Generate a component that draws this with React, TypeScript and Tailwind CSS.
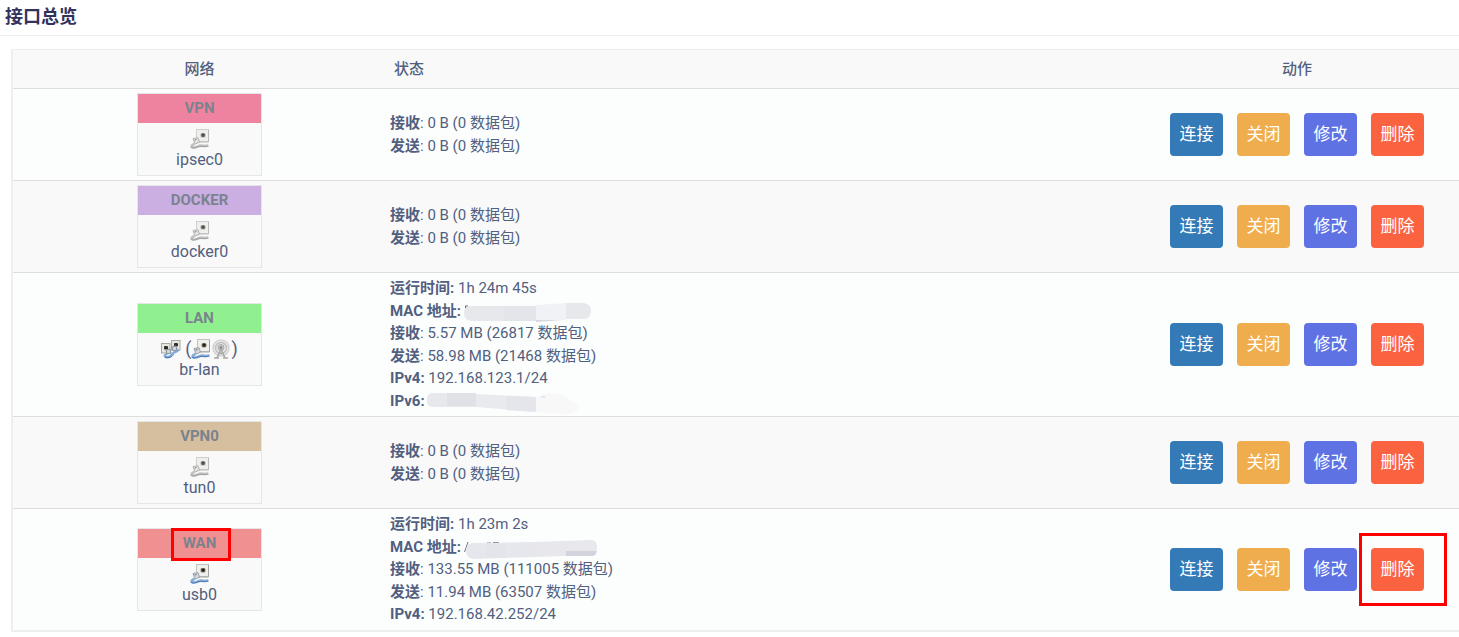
import type { ReactNode } from 'react';
import { clsx } from 'clsx';

type IconProps = { active?: boolean };

function Ethernet({ active }: IconProps) {
  return (
    <svg width="20" height="20" viewBox="0 0 20 20" aria-hidden="true">
      <rect x="6.5" y="0.5" width="12" height="12" fill="#efefec" stroke={active ? '#c2c2bc' : '#cfcfcf'} />
      <path d="M18.5 1v12H8" fill="none" stroke={active ? '#a5a59f' : '#bababa'} />
      <rect x="10.5" y="4" width="5" height="4.500" rx="1.500" fill={active ? '#8d8c74' : '#a8a8a8'} />
      <rect x="11.500" y="4.500" width="3.200" height="3.200" rx="1" fill={active ? '#22241a' : '#505050'} />
      <path d="M3 9.500l5-.8 1.500 4.500-4.500 2z" fill={active ? '#d4d8dd' : '#e2e2e2'} stroke={active ? '#9aa1aa' : '#b3b3b3'} />
      <path d="M4.5 11l2-.5" stroke={active ? '#6b7380' : '#888'} fill="none" />
      <path d="M4.5 15c-3.500 1.500-4 3-1.500 3.500 3.500.5 5-2 8-2 2.500 0 3 1 7.500 0" fill="none" stroke={active ? '#85abd8' : '#c0c0c0'} strokeWidth="2.500" />
      <path d="M1 18.500c3.500 1.500 6-1 9-1s4 .5 8-.5" fill="none" stroke={active ? '#4c7ab5' : '#a0a0a0'} />
    </svg>
  );
}

function Bridge() {
  return (
    <svg width="20" height="20" viewBox="0 0 20 20" aria-hidden="true">
      <rect x="10.5" y="1.500" width="8.500" height="9.500" fill="#e6e6e2" stroke="#a8a8a2" />
      <rect x="0.5" y="4.500" width="8.500" height="9.500" fill="#e6e6e2" stroke="#a8a8a2" />
      <rect x="13" y="4" width="4" height="3.500" rx="1" fill="#2d2f22" />
      <rect x="3" y="7" width="4" height="3.500" rx="1" fill="#2d2f22" />
      <path d="M5 11l4-1 1 4-4 1zM11 8l4-1 1 4-4 1z" fill="#d4d8dd" stroke="#858c95" />
      <path d="M6 15c-3.500 1.500-3 3.500 1 3 4.500-.5 3-3.500 6-4.500 3-.8 4-1 4.500-3" fill="none" stroke="#7fa8d8" strokeWidth="2.200" />
      <path d="M4 18.500c4 1 7-.5 8.500-3" fill="none" stroke="#3f70ad" />
    </svg>
  );
}

function Wifi() {
  return (
    <svg width="20" height="20" viewBox="0 0 20 20" aria-hidden="true">
      <circle cx="10" cy="9" r="8" fill="#ebebeb" stroke="#d3d3d3" strokeWidth="1.500" />
      <circle cx="10" cy="9" r="5.500" fill="none" stroke="#c0c0c0" strokeWidth="1.500" />
      <circle cx="10" cy="8.500" r="3" fill="#cfcfcf" stroke="#a8a8a8" />
      <circle cx="10" cy="8.500" r="1.500" fill="#8a8a8a" />
      <path d="M10 10l-4 9M10 10l4 9M7.500 14.500h5M3 19h5M12 19h5" fill="none" stroke="#a8a8a8" strokeWidth="1.500" />
    </svg>
  );
}

function LanMask() {
  return (
    <svg className="absolute left-full -top-0.5 -ml-px" width="134" height="24" viewBox="0 0 134 24" aria-hidden="true">
      <path d="M5.500 9V6H8" fill="none" stroke="#525f7f" />
      <path d="M10 6H76V21H12Q4 21 4 13Q4 6 10 6Z" fill="#e7e8ec" />
      <path d="M44 6H76V21H44Z" fill="#e3e5ea" />
      <path d="M76 5L106 3V20L76 21Z" fill="#f1f2f5" />
      <path d="M76 20L102 20L76 22Z" fill="#d5d7df" />
      <path d="M106 3H124Q131 4 131 11Q131 18 124 19H106Z" fill="#e7e8ec" />
    </svg>
  );
}

function Ipv6Mask() {
  return (
    <svg className="absolute left-full -top-0.5 -ml-px" width="160" height="26" viewBox="0 0 160 26" aria-hidden="true">
      <path d="M8 3H52V17H8Q3 17 3 10Q3 3 8 3Z" fill="#e7e8ec" />
      <path d="M23 3H52V16H23Z" fill="#e0e1e7" />
      <path d="M52 4L112 7V22L52 17Z" fill="#e9eaee" />
      <path d="M82 6L112 7V22L82 20Z" fill="#e4e6eb" />
      <path d="M112 7L122 3Q142 3 144 9Q156 13 155 18Q152 24 140 24L112 22Z" fill="#f8f8f9" />
      <path d="M117 7h4" stroke="#d3d5dc" />
    </svg>
  );
}

function WanMask() {
  return (
    <svg className="absolute left-full -top-0.5 -ml-px" width="140" height="24" viewBox="0 0 140 24" aria-hidden="true">
      <path d="M4.500 16L8 6M27 7h4M33 6.500h6" fill="none" stroke="#68738e" />
      <path d="M12 7L74 6V21L14 23Q6 22 6 15Q6 8 12 7Z" fill="#e6e7ec" />
      <path d="M26 9H46V22H26Z" fill="#e2e5ea" />
      <path d="M74 6L132 4Q137 5 137 11Q137 18 132 20H106L74 21Z" fill="#e7e7ec" />
      <path d="M106 15H137Q136 20 132 20H106Z" fill="#d2d3dc" />
    </svg>
  );
}

type Field = { label: string; value?: string; light?: boolean; mask?: ReactNode };

type Interface = {
  name: string;
  device: string;
  color: string;
  icons: ReactNode;
  fields: Field[];
  marked?: boolean;
};

const traffic = (rx: string, tx: string): Field[] => [
  { label: '接收', value: rx, light: true },
  { label: '发送', value: tx, light: true },
];

const interfaces: Interface[] = [
  { name: 'VPN', device: 'ipsec0', color: 'bg-[#ee839f]', icons: <Ethernet />, fields: traffic('0 B (0 数据包)', '0 B (0 数据包)') },
  { name: 'DOCKER', device: 'docker0', color: 'bg-[#cbaee2]', icons: <Ethernet />, fields: traffic('0 B (0 数据包)', '0 B (0 数据包)') },
  {
    name: 'LAN',
    device: 'br-lan',
    color: 'bg-[#90f090]',
    icons: (
      <>
        <Bridge />
        <span className="ml-1 text-lg">(</span>
        <Ethernet active />
        <Wifi />
        <span className="text-lg">)</span>
      </>
    ),
    fields: [
      { label: '运行时间', value: '1h 24m 45s' },
      { label: 'MAC 地址', mask: <LanMask /> },
      ...traffic('5.57 MB (26817 数据包)', '58.98 MB (21468 数据包)'),
      { label: 'IPv4', value: '192.168.123.1/24' },
      { label: 'IPv6', mask: <Ipv6Mask /> },
    ],
  },
  { name: 'VPN0', device: 'tun0', color: 'bg-[#d6bf9f]', icons: <Ethernet />, fields: traffic('0 B (0 数据包)', '0 B (0 数据包)') },
  {
    name: 'WAN',
    device: 'usb0',
    color: 'bg-[#f09090]',
    icons: <Ethernet active />,
    marked: true,
    fields: [
      { label: '运行时间', value: '1h 23m 2s' },
      { label: 'MAC 地址', mask: <WanMask /> },
      ...traffic('133.55 MB (111005 数据包)', '11.94 MB (63507 数据包)'),
      { label: 'IPv4', value: '192.168.42.252/24' },
    ],
  },
];

const actions = [
  { label: '连接', color: 'bg-[#337ab7]' },
  { label: '关闭', color: 'bg-[#f0ad4e]' },
  { label: '修改', color: 'bg-[#5e72e4]' },
  { label: '删除', color: 'bg-[#fb6340]' },
];

function InterfaceBox({ item }: { item: Interface }) {
  return (
    <div className="mx-auto h-[83px] w-[125px] border border-[#e6e6e8] bg-[#f9f9f9] text-center text-base">
      <div className={clsx('relative h-[29px] text-[15px] font-bold leading-[29px] text-[#7b838e]', item.color)}>
        {item.name}
        {item.marked && <span className="absolute -top-px left-[33px] h-[33px] w-[60px] border-3 border-[#ff0000]" />}
      </div>
      <div className="mt-1.5 flex h-5 items-center justify-center leading-5">{item.icons}</div>
      <div className="leading-[22px]">{item.device}</div>
    </div>
  );
}

function InterfaceRow({ item }: { item: Interface }) {
  return (
    <tr className="bg-[#fcfefd] even:bg-[#f9f9f9]">
      <td className="border-t border-[#dddddd] p-1">
        <InterfaceBox item={item} />
      </td>
      <td className="border-t border-[#dddddd] p-1">
        {item.fields.map((f) => (
          <div key={f.label}>
            <span className="relative">
              <strong>{f.label}{!f.light && ':'}</strong>
              {f.light && ':'}
              {f.mask}
            </span>{' '}
            {f.value}
          </div>
        ))}
      </td>
      <td className="border-t border-[#dddddd] p-1">
        <div className="flex justify-center gap-3.5">
          {actions.map((a) => (
            <div key={a.label} className="relative">
              <button type="button" className={clsx('h-[43px] w-[53px] rounded text-[17px] text-white', a.color)}>
                {a.label}
              </button>
              {item.marked && a.label === '删除' && (
                <span className="pointer-events-none absolute -top-[15px] -left-3 h-[73px] w-[88px] border-3 border-[#ff0000]" />
              )}
            </div>
          ))}
        </div>
      </td>
    </tr>
  );
}

export default function App() {
  return (
    <main className="bg-white font-[Roboto,'Noto_Sans_CJK_SC',sans-serif] text-[15px] leading-normal text-[#525f7f]">
      <h3 className="mb-[13px] h-9 border-b border-[#eeeeee] pl-[5px] text-lg leading-[34px] font-bold text-[#32325d]">接口总览</h3>
      <div className="ml-[11px] border-t border-b-2 border-l-2 border-[#eeeeee]">
        <table className="w-full table-fixed border-separate border-spacing-0">
          <thead>
            <tr className="h-[38px] bg-[#f9f9f9]">
              <th className="w-[373px] font-medium">网络</th>
              <th className="px-2 text-left font-medium">状态</th>
              <th className="w-[324px] font-medium">动作</th>
            </tr>
          </thead>
          <tbody>
            {interfaces.map((item) => (
              <InterfaceRow key={item.name} item={item} />
            ))}
          </tbody>
        </table>
      </div>
    </main>
  );
}
